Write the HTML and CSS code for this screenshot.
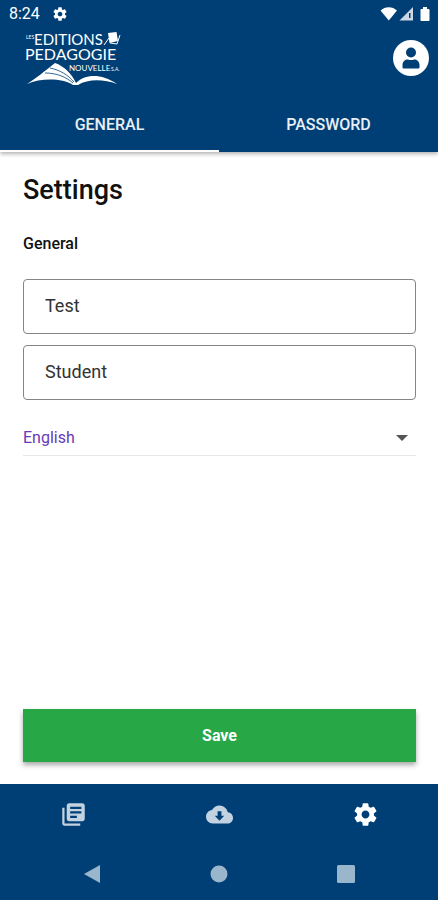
FILE: index.html
```html
<!DOCTYPE html>
<html lang="en">
<head>
<meta charset="utf-8">
<meta name="viewport" content="width=device-width, initial-scale=1">
<title>Settings</title>
<link rel="stylesheet" href="styles.css">
</head>
<body>
<svg width="0" height="0" class="defs" aria-hidden="true">
  <symbol id="gear" viewBox="0 0 24 24"><path d="M19.43 12.98c.04-.32.07-.64.07-.98s-.03-.66-.07-.98l2.11-1.65c.19-.15.24-.42.12-.64l-2-3.46c-.12-.22-.39-.3-.61-.22l-2.49 1c-.52-.4-1.08-.73-1.69-.98l-.38-2.65C14.46 2.18 14.25 2 14 2h-4c-.25 0-.46.18-.49.42l-.38 2.65c-.61.25-1.17.59-1.69.98l-2.49-1c-.23-.09-.49 0-.61.22l-2 3.46c-.13.22-.07.49.12.64l2.11 1.65c-.04.32-.07.65-.07.98s.03.66.07.98l-2.11 1.65c-.19.15-.24.42-.12.64l2 3.46c.12.22.39.3.61.22l2.49-1c.52.4 1.08.73 1.69.98l.38 2.65c.03.24.24.42.49.42h4c.25 0 .46-.18.49-.42l.38-2.65c.61-.25 1.17-.59 1.69-.98l2.49 1c.23.09.49 0 .61-.22l2-3.46c.12-.22.07-.49-.12-.64l-2.11-1.65zM12 15.5c-1.93 0-3.5-1.57-3.5-3.5s1.57-3.5 3.5-3.5 3.5 1.57 3.5 3.5-1.57 3.5-3.5 3.5z"/></symbol>
</svg>
<div class="app">
  <div class="status">
    <span class="clock">8:24</span>
    <svg class="status-gear" aria-hidden="true"><use href="#gear"/></svg>
    <svg class="signals" viewBox="0 0 50 16" aria-hidden="true">
      <path d="M0.500 4.500C5 0 12.500 0 17 4.500L8.800 14.500z"/>
      <path d="M33 1v13.500H19.500z" opacity=".8"/>
      <path d="M29 7h1.500v5H29z" fill="#003f75"/>
      <path d="M43 1h4v2h1.500c.6 0 1 .4 1 1v10c0 .6-.4 1-1 1h-7c-.6 0-1-.4-1-1V4c0-.6.4-1 1-1H43z"/>
    </svg>
  </div>
  <header class="header">
    <svg class="logo" viewBox="0 0 98 56" role="img" aria-label="Les Editions Pédagogie Nouvelle S.A.">
      <text class="logo-tiny" x="2" y="9">LES</text>
      <text class="logo-top" x="10" y="15">EDITIONS</text>
      <path d="M84 3l8.500-1 1.500 9-8.500 2z"/>
      <path d="M85 8l-5 7M86 13l7 1 3-9" fill="none" stroke="#fff"/>
      <text class="logo-main" x="1" y="30">PEDAGOGIE</text>
      <text class="logo-sub" x="45" y="41">NOUVELLE</text>
      <text class="logo-tiny" x="87" y="41">S.A.</text>
      <path d="M3 54C11 49 21 41 31 33c9 3 17 11 21 20 9-9 25-10 41 1-14-5-29-5-39 1h-5C38 48 17 48 3 54z"/>
      <path d="M26 38c10 2 18 7 24 14M21 43c12 0 21 4 28 10" fill="none" stroke="#003f75" stroke-width=".8"/>
    </svg>
    <button class="account" type="button" aria-label="Account">
      <svg viewBox="0 0 36 36" aria-hidden="true">
        <circle cx="18" cy="18" r="18" fill="#fff"/>
        <circle cx="18" cy="12.500" r="5" fill="#003f75"/>
        <path d="M9.500 25c0-3.500 2.500-5.500 5.500-5.500 2 .8 4 .8 6 0 3 0 5.500 2 5.500 5.500v2c0 1-.6 1.500-1.500 1.500H11c-.9 0-1.500-.5-1.500-1.500z" fill="#003f75"/>
      </svg>
    </button>
  </header>
  <nav class="tabs" aria-label="Settings sections">
    <button class="tab active" type="button">GENERAL</button>
    <button class="tab" type="button">PASSWORD</button>
  </nav>
  <main class="content">
    <h1>Settings</h1>
    <h2>General</h2>
    <form class="form">
      <input class="field" type="text" aria-label="First name" value="Test">
      <input class="field" type="text" aria-label="Last name" value="Student">
      <div class="select-row">
        <select class="language" aria-label="Language"><option>English</option></select>
        <svg class="caret" viewBox="0 0 12 6" aria-hidden="true"><path d="M0 0h12L6 6z"/></svg>
      </div>
      <button class="save" type="button">Save</button>
    </form>
  </main>
  <nav class="bottom-nav" aria-label="Main">
    <a href="#library" aria-label="Library"><svg class="dim" viewBox="0 0 24 24"><path d="M4 6H2v14c0 1.100.9 2 2 2h14v-2H4V6zm16-4H8c-1.100 0-2 .9-2 2v12c0 1.100.9 2 2 2h12c1.100 0 2-.9 2-2V4c0-1.100-.9-2-2-2zm-1 9H9V9h10v2zm-4 4H9v-2h6v2zm4-8H9V5h10v2z"/></svg></a>
    <a href="#downloads" aria-label="Downloads"><svg class="dim" viewBox="0 0 24 24"><path fill-rule="evenodd" d="M19.350 10.040C18.670 6.590 15.640 4 12 4 9.110 4 6.600 5.640 5.350 8.040 2.340 8.360 0 10.910 0 14c0 3.310 2.690 6 6 6h13c2.760 0 5-2.240 5-5 0-2.640-2.050-4.780-4.650-4.960zM10.300 9h3.400v4h2.500L12 17.500 7.800 13h2.500z"/></svg></a>
    <a href="#settings" aria-label="Settings"><svg aria-hidden="true"><use href="#gear"/></svg></a>
  </nav>
  <div class="system">
    <button type="button" aria-label="Back"><svg viewBox="0 0 18 18"><path d="M17 0v18L1 9z"/></svg></button>
    <button type="button" aria-label="Home"><svg viewBox="0 0 18 18"><circle cx="9" cy="9" r="8.500"/></svg></button>
    <button type="button" aria-label="Recent apps"><svg viewBox="0 0 18 18"><rect width="18" height="18" rx="1.500"/></svg></button>
  </div>
</div>
</body>
</html>
```
FILE: styles.css
```css
* { box-sizing: border-box; }
body { margin: 0; font-family: Roboto, sans-serif; color: #111; background: #fff; }
button, input, select { font-family: inherit; }
button { border: 0; padding: 0; background: none; }
.defs { position: absolute; }
.app { display: flex; flex-direction: column; min-height: 100vh; }

.status { display: flex; align-items: center; height: 28px; padding: 0 8px 0 9px; background: #003f75; color: #fff; fill: #fff; }
.clock { font-size: 16px; line-height: 28px; }
.status-gear { width: 16px; height: 16px; margin-left: 12px; }
.signals { width: 50px; height: 16px; margin-left: auto; }

.header { display: flex; justify-content: space-between; align-items: center; height: 64px; padding: 2px 9px 6px 24px; background: #003f75; }
.logo { width: 98px; height: 56px; fill: #fff; font-family: Lato, sans-serif; }
.logo-top { font-size: 15px; }
.logo-main { font-size: 16px; }
.logo-sub { font-size: 8px; }
.logo-tiny { font-size: 5px; }
.account { width: 36px; height: 36px; }
.account svg { display: block; }

.tabs { display: flex; height: 60px; background: #003f75; box-shadow: 0 2px 4px rgba(0, 0, 0, 0.3); }
.tab { flex: 1; padding-top: 6px; border-bottom: 2px solid transparent; color: #e9eff5; font-size: 16px; font-weight: 500; }
.tab.active { border-color: #fff; }

.content { display: flex; flex: 1; flex-direction: column; padding: 20px 22px 22px 23px; }
h1 { margin: 0; font-size: 27px; line-height: 37px; font-weight: 500; }
h2 { margin: 24px 0; font-size: 16px; line-height: 22px; font-weight: 500; }
.form { display: flex; flex: 1; flex-direction: column; }
.field { width: 100%; height: 55px; margin: 0 0 11px; padding: 0 21px 2px; border: 1px solid #858585; border-radius: 4px; background: #fff; color: #333; font-size: 18px; }
.select-row { display: flex; align-items: center; height: 45px; padding: 9px 8px 0 0; border-bottom: 1px solid #e6e6e6; }
.language { flex: 1; appearance: none; border: 0; padding: 0; background: none; color: #673ab7; font-size: 16px; }
.caret { width: 12px; height: 6px; fill: #555; pointer-events: none; }
.save { height: 53px; margin-top: auto; background: #27a745; color: #fff; font-size: 16px; font-weight: 700; box-shadow: 0 3px 5px rgba(0, 0, 0, 0.35); }

.bottom-nav { display: flex; height: 61px; background: #003f75; }
.bottom-nav a { display: flex; flex: 1; align-items: center; justify-content: center; }
.bottom-nav svg { width: 27px; height: 27px; fill: #fff; }
.bottom-nav .dim { fill: #c3d2e0; }
.system { display: flex; height: 55px; padding: 2px 28px 0; background: #003f75; }
.system button { display: flex; flex: 1; align-items: center; justify-content: center; }
.system svg { width: 18px; height: 18px; fill: #9ab6cc; }
```
